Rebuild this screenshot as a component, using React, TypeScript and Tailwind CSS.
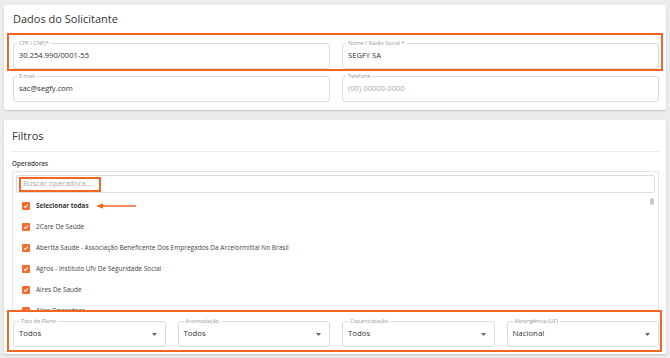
import React from "react";

const ORANGE = "#f26522";

const operadoras = [
  "2Care De Saúde",
  "Abertta Saúde - Associação Beneficente Dos Empregados Da Arcelormittal No Brasil",
  "Agros - Instituto Ufv De Seguridade Social",
  "Aires De Saude",
  "Alice Operadora",
];

const filtros = [
  { label: "Tipo de Plano", value: "Todos" },
  { label: "Acomodação", value: "Todos" },
  { label: "Coparticipação", value: "Todos" },
  { label: "Abrangência (UF)", value: "Nacional" },
];

const FloatField = ({ label, value, placeholder }: { label: string; value?: string; placeholder?: string }) => (
  <div className="relative h-[26px] border border-[#dcdcdc] rounded-[3px] flex items-center px-[5px]">
    <span className="absolute -top-[4px] left-[3px] px-[2px] bg-white text-[5.5px] leading-[7px] text-[#9a9a9a]">
      {label}
    </span>
    {value ? (
      <span className="text-[7.6px] text-[#333]">{value}</span>
    ) : (
      <span className="text-[7.6px] text-[#aaa]">{placeholder}</span>
    )}
  </div>
);

const SelectField = ({ label, value }: { label: string; value: string }) => (
  <div className="relative h-[26px] border border-[#dcdcdc] rounded-[3px] flex items-center justify-between pl-[5px] pr-[8px]">
    <span className="absolute -top-[4px] left-[5px] px-[2px] bg-white text-[5.5px] leading-[7px] text-[#9a9a9a]">
      {label}
    </span>
    <span className="text-[7.8px] text-[#333]">{value}</span>
    <svg width="5" height="3" viewBox="0 0 5 3">
      <path d="M0 0h5L2.5 3z" fill="#666" />
    </svg>
  </div>
);

const CheckBox = () => (
  <span className="w-[8px] h-[8px] rounded-[1px] bg-[#f26a2e] flex items-center justify-center shrink-0">
    <svg width="6" height="6" viewBox="0 0 6 6">
      <path d="M1 3.2l1.4 1.3L5 1.5" stroke="#fff" strokeWidth="1.1" fill="none" />
    </svg>
  </span>
);

export default function App() {
  return (
    <div
      className="w-[670px] h-[358px] overflow-hidden bg-[#ececec] pt-[5px] px-[4px] flex flex-col gap-[10px]"
      style={{ fontFamily: "'Open Sans', 'Liberation Sans', sans-serif" }}
    >
      {/* Dados do Solicitante */}
      <div className="bg-white rounded-[2px] shadow-[0_1px_2px_rgba(0,0,0,0.18)] pt-[6px] pl-[9px] pr-[7px] pb-[8px]">
        <h2 className="text-[11px] leading-[16px] text-[#333]">Dados do Solicitante</h2>
        <div className="mt-[6px] -ml-[6px] -mr-[4px] pl-[4px] pr-[2px] pt-[8px] border-2 border-[#f26522]">
          <div className="grid grid-cols-2 gap-[12px]">
            <FloatField label="CPF / CNPJ*" value="30.254.990/0001-55" />
            <FloatField label="Nome / Razão Social *" value="SEGFY SA" />
          </div>
        </div>
        <div className="mt-[5px] grid grid-cols-2 gap-[12px]">
          <FloatField label="E-mail" value="sac@segfy.com" />
          <FloatField label="Telefone" placeholder="(00) 00000-0000" />
        </div>
      </div>

      {/* Filtros */}
      <div className="bg-white rounded-[2px] shadow-[0_1px_2px_rgba(0,0,0,0.18)] pt-[8px] pl-[8px] pr-[7px] pb-[2px]">
        <div className="pb-[7px] border-b border-[#ececec]">
          <h2 className="text-[11px] leading-[16px] text-[#333]">Filtros</h2>
        </div>
        <div className="mt-[6.5px] text-[6.3px] leading-[9px] font-semibold text-[#444]">Operadoras</div>
        <div className="relative mt-[3.5px] h-[139px] border border-b-0 border-[#e6e6e6] rounded-t-[2px] px-[3px] pt-[3px] overflow-hidden">
          <div className="relative h-[18px] border border-[#dcdcdc] rounded-[2px] flex items-center pl-[6px]">
            <span className="text-[7.5px] text-[#aaa]">Buscar operadora...</span>
            <span className="absolute left-[2px] top-[1px] w-[82px] h-[14.5px] border-2 border-[#f26522]" />
          </div>
          <span className="absolute right-[4px] top-[26px] w-[4px] h-[7px] rounded-full bg-[#c8c8c8]" />
          <div className="mt-[2.5px] pl-[6px]">
            <div className="h-[21px] flex items-center gap-[6px]">
              <CheckBox />
              <span className="text-[6.4px] font-bold text-[#333]">Selecionar todas</span>
              <svg width="40" height="6" viewBox="0 0 40 6" className="ml-[1px]">
                <path d="M0 3L7 0.2V5.8z" fill={ORANGE} />
                <path d="M6 3H40" stroke={ORANGE} strokeWidth="1.3" />
              </svg>
            </div>
            {operadoras.map((nome) => (
              <div key={nome} className="h-[21px] flex items-center gap-[6px]">
                <CheckBox />
                <span className="text-[6.5px] text-[#444]">{nome}</span>
              </div>
            ))}
          </div>
        </div>
        <div className="-ml-[5px] -mr-[3px] pl-[4px] pr-[1px] pt-[9px] pb-[3px] border-2 border-[#f26522]">
          <div className="grid grid-cols-4 gap-[12px]">
            {filtros.map((f) => (
              <SelectField key={f.label} label={f.label} value={f.value} />
            ))}
          </div>
        </div>
      </div>
    </div>
  );
}
